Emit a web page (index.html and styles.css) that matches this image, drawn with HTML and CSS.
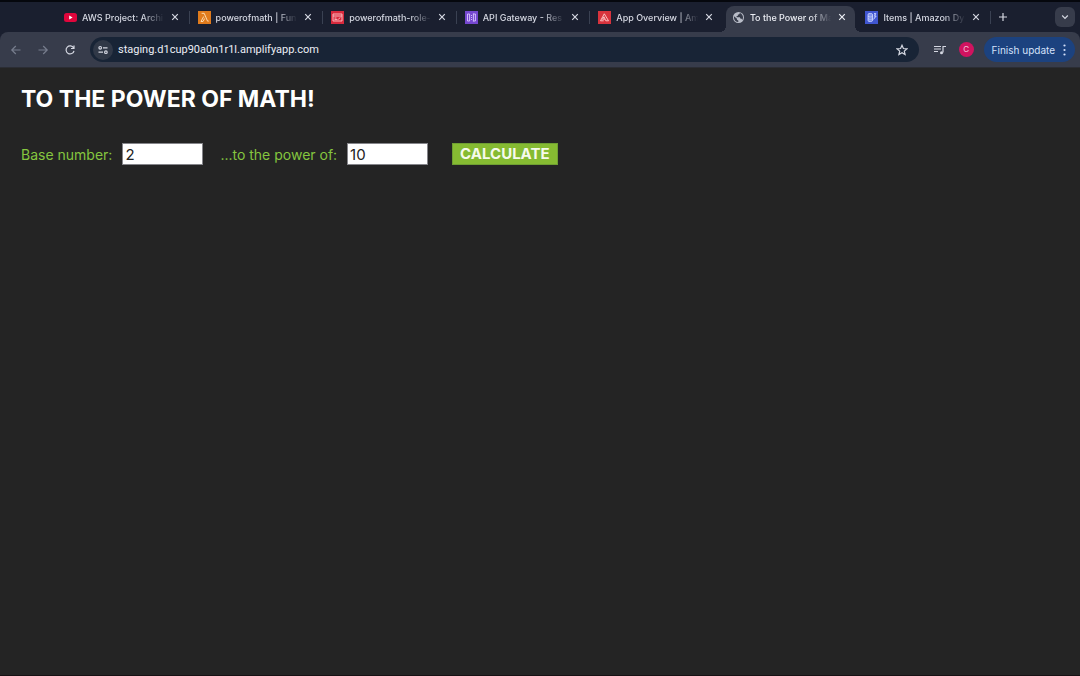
FILE: index.html
```html
<!DOCTYPE html>
<html lang="en">
<head>
<meta charset="utf-8">
<title>To the Power of Math!</title>
<link rel="stylesheet" href="styles.css">
</head>
<body>
<header class="browser">
  <nav class="tabstrip" aria-label="Tabs">
    <div class="tabs">
      <div class="tab">
        <svg class="favicon" viewBox="0 0 13 13"><rect y="2" width="13" height="9" rx="2.5" fill="#e0063c"/><path d="M5.2 4.6v3.8L8.6 6.5z" fill="#fff"/></svg>
        <span class="title">AWS Project: Archi</span>
        <button class="close" aria-label="Close tab"><svg viewBox="0 0 8 8"><path d="M1.2 1.2l5.6 5.6M6.8 1.2L1.2 6.8"/></svg></button>
      </div>
      <div class="tab">
        <svg class="favicon" viewBox="0 0 13 13"><rect width="13" height="13" fill="#e07b1c"/><path d="M3.6 2.3h2.6l3.3 7.8h1.2M5.7 5.5l-2.7 5h2l1.6-3" fill="none" stroke="#ffe3bd" stroke-width=".9"/></svg>
        <span class="title">powerofmath | Fun</span>
        <button class="close" aria-label="Close tab"><svg viewBox="0 0 8 8"><path d="M1.2 1.2l5.6 5.6M6.8 1.2L1.2 6.8"/></svg></button>
      </div>
      <div class="tab">
        <svg class="favicon" viewBox="0 0 13 13"><rect width="13" height="13" fill="#d82a3d"/><path d="M2 3h9v7H2zM2 5h9M3.5 7h2M3.5 8.6h3M7.2 8.4l2.2-2" fill="none" stroke="#ffc6c9" stroke-width=".9"/></svg>
        <span class="title">powerofmath-role-</span>
        <button class="close" aria-label="Close tab"><svg viewBox="0 0 8 8"><path d="M1.2 1.2l5.6 5.6M6.8 1.2L1.2 6.8"/></svg></button>
      </div>
      <div class="tab">
        <svg class="favicon" viewBox="0 0 13 13"><rect width="13" height="13" fill="#7547cf"/><path d="M4.6 3H2.5v7h2.1zM8.4 2.5v8M8.4 3h2v7h-2M6.5 4v1M6.5 6v1M6.5 8v1" fill="none" stroke="#dcc8ff" stroke-width=".9"/></svg>
        <span class="title">API Gateway - Res</span>
        <button class="close" aria-label="Close tab"><svg viewBox="0 0 8 8"><path d="M1.2 1.2l5.6 5.6M6.8 1.2L1.2 6.8"/></svg></button>
      </div>
      <div class="tab before-active">
        <svg class="favicon" viewBox="0 0 13 13"><rect width="13" height="13" fill="#d8333d"/><path d="M6.3 2.8L2.5 9.8h3.2M6.3 2.8l4.2 7H7.8L6 5.8 4.5 8.2h2.3" fill="none" stroke="#ffd0d0" stroke-width=".9"/></svg>
        <span class="title">App Overview | Am</span>
        <button class="close" aria-label="Close tab"><svg viewBox="0 0 8 8"><path d="M1.2 1.2l5.6 5.6M6.8 1.2L1.2 6.8"/></svg></button>
      </div>
      <div class="tab active">
        <svg class="favicon" viewBox="0 0 13 13"><circle cx="6.5" cy="6.5" r="5.5" fill="#b9bdc8"/><path d="M2 5.2l3 2.5v1l1.3.7v1.5C3.6 11.3 1.7 8.6 2 5.2zM7.8 2.1c-.2 1.2-.8 1.5-2 1.6v1.2H4.6V6.2h3.2l.8 1.5h1l.7 1.2c1-1.6 1-3.8-.2-5.2-.6-.8-1.4-1.4-2.3-1.6z" fill="#373c4b"/></svg>
        <span class="title">To the Power of Ma</span>
        <button class="close" aria-label="Close tab"><svg viewBox="0 0 8 8"><path d="M1.2 1.2l5.6 5.6M6.8 1.2L1.2 6.8"/></svg></button>
      </div>
      <div class="tab">
        <svg class="favicon" viewBox="0 0 13 13"><rect width="13" height="13" fill="#4056d0"/><path d="M3 3.2c0-1 4.5-1 4.5 0v6.6c0 1-4.5 1-4.5 0zM3 5.3c1 .7 3.5.7 4.5 0M3 7.6c1 .7 3.5.7 4.5 0M9 2.5h1.8L9.7 5h1.5L8.5 8.5" fill="#7f93ee" stroke="#d4dcff" stroke-width=".8"/></svg>
        <span class="title">Items | Amazon Dy</span>
        <button class="close" aria-label="Close tab"><svg viewBox="0 0 8 8"><path d="M1.2 1.2l5.6 5.6M6.8 1.2L1.2 6.8"/></svg></button>
      </div>
    </div>
    <div class="strip-end">
      <button class="new-tab" aria-label="New tab"><svg viewBox="0 0 8 8"><path d="M4 0v8M0 4h8"/></svg></button>
      <button class="tab-search" aria-label="Search tabs"><svg viewBox="0 0 8 8"><path d="M1.2 2.5L4 5.3l2.8-2.8"/></svg></button>
    </div>
  </nav>
  <div class="toolbar">
    <div class="nav-buttons">
      <button class="icon dim" aria-label="Back"><svg viewBox="0 0 12 12"><path d="M10.5 6H2M5.8 2L1.8 6l4 4"/></svg></button>
      <button class="icon dim" aria-label="Forward"><svg viewBox="0 0 12 12"><path d="M1.5 6H10M6.2 2l4 4-4 4"/></svg></button>
      <button class="icon" aria-label="Reload"><svg viewBox="0 0 12 12"><path d="M9.6 4A4 4 0 1 0 10 6.8M10 1.5v3H7"/></svg></button>
    </div>
    <div class="address">
      <button class="site-info" aria-label="Site information"><svg viewBox="0 0 12 12"><circle cx="3.2" cy="3.8" r="1.3"/><path d="M6 3.8h4.5M1.5 8.2H6"/><circle cx="8.9" cy="8.2" r="1.3"/></svg></button>
      <input class="url" type="text" aria-label="Address" value="staging.d1cup90a0n1r1l.amplifyapp.com">
      <button class="icon star" aria-label="Bookmark"><svg viewBox="0 0 12 12"><path d="M6 1.3l1.4 3.2 3.5.3-2.6 2.3.8 3.4L6 8.7l-3.1 1.8.8-3.4L1.1 4.8l3.5-.3z"/></svg></button>
    </div>
    <div class="actions">
      <button class="icon media" aria-label="Media controls"><svg viewBox="0 0 12 12"><path d="M0 2.5h7M0 5h7M0 7.5h4M9 8.5V2.5h3"/><circle cx="7.5" cy="8.8" r="1.5" fill="#d5d8e2" stroke="none"/></svg></button>
      <button class="avatar" aria-label="Profile">C</button>
      <button class="update">Finish update<svg viewBox="0 0 3 12"><circle cx="1.5" cy="1.5" r="1.1"/><circle cx="1.5" cy="6" r="1.1"/><circle cx="1.5" cy="10.5" r="1.1"/></svg></button>
    </div>
  </div>
</header>
<main class="page">
  <h1>TO THE POWER OF MATH!</h1>
  <form class="calculator">
    <label for="base">Base number:</label>
    <input id="base" class="number" type="text" value="2">
    <label for="exponent">...to the power of:</label>
    <input id="exponent" class="number" type="text" value="10">
    <button class="calculate" type="button">CALCULATE</button>
  </form>
</main>
</body>
</html>
```
FILE: styles.css
```css
* { box-sizing: border-box; }

body {
  margin: 0;
  min-height: 100vh;
  background: #242424;
  border-bottom: 1px solid #171114;
  font-family: Inter, "Liberation Sans", sans-serif;
}

button {
  margin: 0;
  padding: 0;
  border: 0;
  background: none;
  color: inherit;
  font: inherit;
}

svg { display: block; flex: none; }

.browser { color: #d5d8e2; background: #1a1f2f; }

.tabstrip {
  display: flex;
  height: 32px;
  padding-left: 57px;
  border-top: 2px solid #05070d;
}

.tabs { display: flex; flex: 1; min-width: 0; padding-top: 4px; }

.tab {
  position: relative;
  display: flex;
  flex: 1;
  align-items: center;
  min-width: 0;
  height: 26px;
  padding: 0 12px 4px 7px;
  font-size: 9px;
  font-weight: 500;
}

.tab::after {
  content: "";
  position: absolute;
  right: 1px;
  top: 5px;
  width: 1px;
  height: 13px;
  background: #3a4152;
}

.before-active::after { display: none; }

.favicon { width: 13px; height: 13px; }

.title {
  flex: 1;
  min-width: 0;
  margin: 0 5px;
  overflow: hidden;
  white-space: nowrap;
  mask-image: linear-gradient(90deg, #000 72%, transparent 98%);
}

.close svg { width: 8px; height: 8px; }

.close svg, .new-tab svg, .tab-search svg, .icon svg, .site-info svg {
  fill: none;
  stroke: currentColor;
  stroke-width: 1.2;
}

.active { z-index: 0; color: #eceef4; }

.active::before {
  content: "";
  position: absolute;
  z-index: -1;
  inset: 0 3px 0 1px;
  border-radius: 8px 8px 0 0;
  background: #373c4b;
}

.active::after {
  z-index: -1;
  inset: auto -3px 0 -5px;
  width: auto;
  height: 6px;
  background:
    radial-gradient(circle at 0 0, transparent 6px, #373c4b 6px) left / 6px 6px no-repeat,
    radial-gradient(circle at 100% 0, transparent 6px, #373c4b 6px) right / 6px 6px no-repeat;
}

.strip-end {
  display: flex;
  align-items: center;
  justify-content: space-between;
  width: 88px;
  padding: 0 5px 0 7px;
}

.new-tab svg { width: 8px; height: 8px; }

.tab-search {
  display: grid;
  place-items: center;
  width: 20px;
  height: 20px;
  border-radius: 6px;
  background: #373c4b;
}

.tab-search svg { width: 8px; height: 8px; }

.toolbar {
  display: flex;
  align-items: center;
  height: 36px;
  padding: 0 5px 0 10px;
  border-bottom: 1px solid #2b2d34;
  border-radius: 8px 8px 0 0;
  background: #373c4b;
}

.nav-buttons { display: flex; gap: 15px; width: 80px; }

.icon svg { width: 12px; height: 12px; }
.dim { color: #777d8d; }

.address {
  display: flex;
  flex: 1;
  align-items: center;
  min-width: 0;
  height: 25px;
  padding: 0 11px 0 3px;
  border-radius: 13px;
  background: #182436;
}

.site-info {
  display: grid;
  place-items: center;
  width: 20px;
  height: 20px;
  border-radius: 10px;
  background: #303847;
}

.site-info svg { width: 12px; height: 12px; }

.url {
  flex: 1;
  min-width: 0;
  margin-left: 5px;
  padding: 0;
  border: 0;
  outline: 0;
  background: none;
  color: #eceff5;
  font: 11px Roboto, sans-serif;
}

.actions { display: flex; align-items: center; padding-left: 15px; }

.avatar {
  width: 15px;
  height: 15px;
  margin: 0 10px 0 13px;
  border-radius: 50%;
  background: #d0135f;
  color: #f3c6dc;
  font-size: 8px;
  line-height: 15px;
}

.update {
  display: flex;
  align-items: center;
  gap: 8px;
  height: 25px;
  padding: 0 9px 0 8px;
  border-radius: 13px;
  background: #1c427f;
  color: #d4e1fa;
  font-size: 10px;
}

.update svg { width: 3px; height: 12px; fill: currentColor; }

.page { padding: 16px 21px; }

h1 {
  margin: 0;
  color: #fff;
  font-size: 23px;
  font-weight: 700;
  line-height: 30px;
}

.calculator {
  display: flex;
  align-items: center;
  margin-top: 29px;
  color: #85c63f;
  font-size: 14px;
}

.number {
  width: 81px;
  height: 22px;
  margin: 0 17px 0 10px;
  padding: 0 2px;
  border: 1px solid #85858a;
  background: #fff;
  color: #222;
  font: 15px Inter, sans-serif;
}

.calculate {
  height: 22px;
  margin-left: 7px;
  padding: 0 7px;
  border: 1px solid #6f9f32;
  background: #86bb32;
  color: #f6faec;
  font-size: 15px;
  font-weight: 700;
  line-height: 20px;
}
```
